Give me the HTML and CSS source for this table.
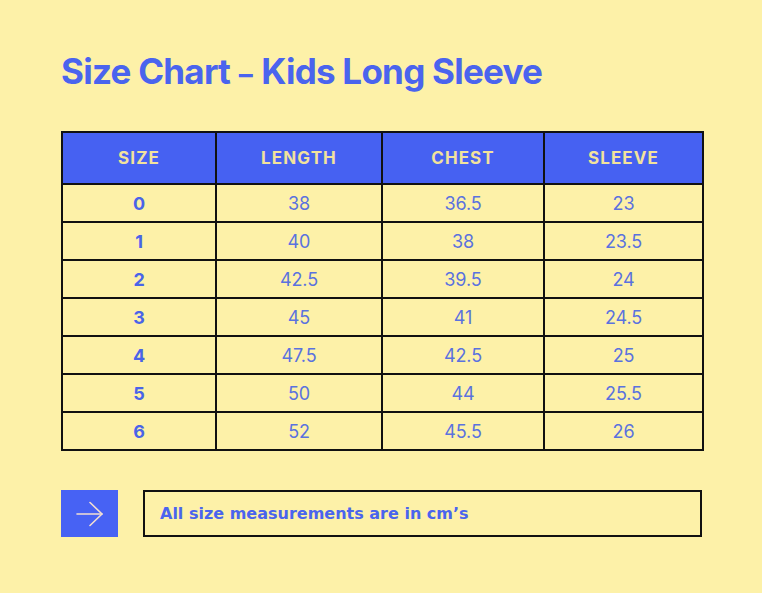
FILE: index.html
```html
<!DOCTYPE html>
<html>
<head>
<meta charset="utf-8">
<link rel="stylesheet" href="styles.css">
</head>
<body>
<div class="page">
  <h1 class="title">Size Chart <span class="dash">–</span> Kids Long Sleeve</h1>
  <table class="chart">
    <colgroup>
      <col class="c1"><col class="c2"><col class="c3"><col class="c4">
    </colgroup>
    <thead>
      <tr><th>SIZE</th><th>LENGTH</th><th>CHEST</th><th>SLEEVE</th></tr>
    </thead>
    <tbody>
      <tr><td class="size">0</td><td>38</td><td>36.5</td><td>23</td></tr>
      <tr><td class="size">1</td><td>40</td><td>38</td><td>23.5</td></tr>
      <tr><td class="size">2</td><td>42.5</td><td>39.5</td><td>24</td></tr>
      <tr><td class="size">3</td><td>45</td><td>41</td><td>24.5</td></tr>
      <tr><td class="size">4</td><td>47.5</td><td>42.5</td><td>25</td></tr>
      <tr><td class="size">5</td><td>50</td><td>44</td><td>25.5</td></tr>
      <tr><td class="size">6</td><td>52</td><td>45.5</td><td>26</td></tr>
    </tbody>
  </table>
  <div class="note">
    <div class="arrow">
      <svg width="30" height="26" viewBox="0 0 30 26" fill="none" stroke="#f3dfd0" stroke-width="1.6" stroke-linecap="round" stroke-linejoin="round">
        <path d="M2 13 H27"/>
        <path d="M15 1.5 L27 13 L15 24.5"/>
      </svg>
    </div>
    <div class="note-box">All size measurements are in cm’s</div>
  </div>
</div>
</body>
</html>
```

FILE: styles.css
```css
html, body {
  margin: 0;
  padding: 0;
}
body {
  background: #fdf1a8;
  width: 762px;
  height: 593px;
  overflow: hidden;
  font-family: Inter, "Liberation Sans", sans-serif;
}
.page {
  padding: 50px 0 0 61px;
  border-left: 1px solid #e6dcb0;
  height: 100%;
  box-sizing: border-box;
  margin-left: -1px;
}
.title {
  margin: 0;
  height: 42px;
  font-size: 35px;
  line-height: 42px;
  font-weight: 700;
  letter-spacing: -0.75px;
  color: #4a64ee;
}
.dash {
  font-size: 28px;
  line-height: 0;
  letter-spacing: 0;
  margin: 0 1px;
}
.chart {
  margin-top: 39px;
  border-collapse: collapse;
  width: 641px;
  table-layout: fixed;
  border: 2px solid #111;
}
.c1 { width: 154px; }
.c2 { width: 166px; }
.c3 { width: 162px; }
.c4 { width: 159px; }
.chart th, .chart td {
  border: 2px solid #111;
  text-align: center;
  padding: 0;
}
.chart th {
  background: #4661f2;
  color: #f2e29c;
  font-size: 17px;
  font-weight: 700;
  height: 50px;
  letter-spacing: 1.1px;
}
.chart td {
  color: #5a72df;
  font-size: 18px;
  font-weight: 400;
  height: 36px;
  letter-spacing: -0.1px;
}
.chart td.size {
  font-weight: 700;
  color: #4a64e8;
}
.note {
  margin-top: 39px;
  display: flex;
  gap: 25px;
  align-items: stretch;
}
.arrow {
  width: 57px;
  height: 47px;
  background: #4762f4;
  display: flex;
  align-items: center;
  justify-content: center;
}
.note-box {
  width: 540px;
  height: 43px;
  border: 2px solid #111;
  display: flex;
  align-items: center;
  padding-left: 15px;
  box-sizing: content-box;
  font-family: "DejaVu Sans", sans-serif;
  font-size: 16px;
  font-weight: 700;
  color: #4a64ee;
  letter-spacing: 0;
}
```
